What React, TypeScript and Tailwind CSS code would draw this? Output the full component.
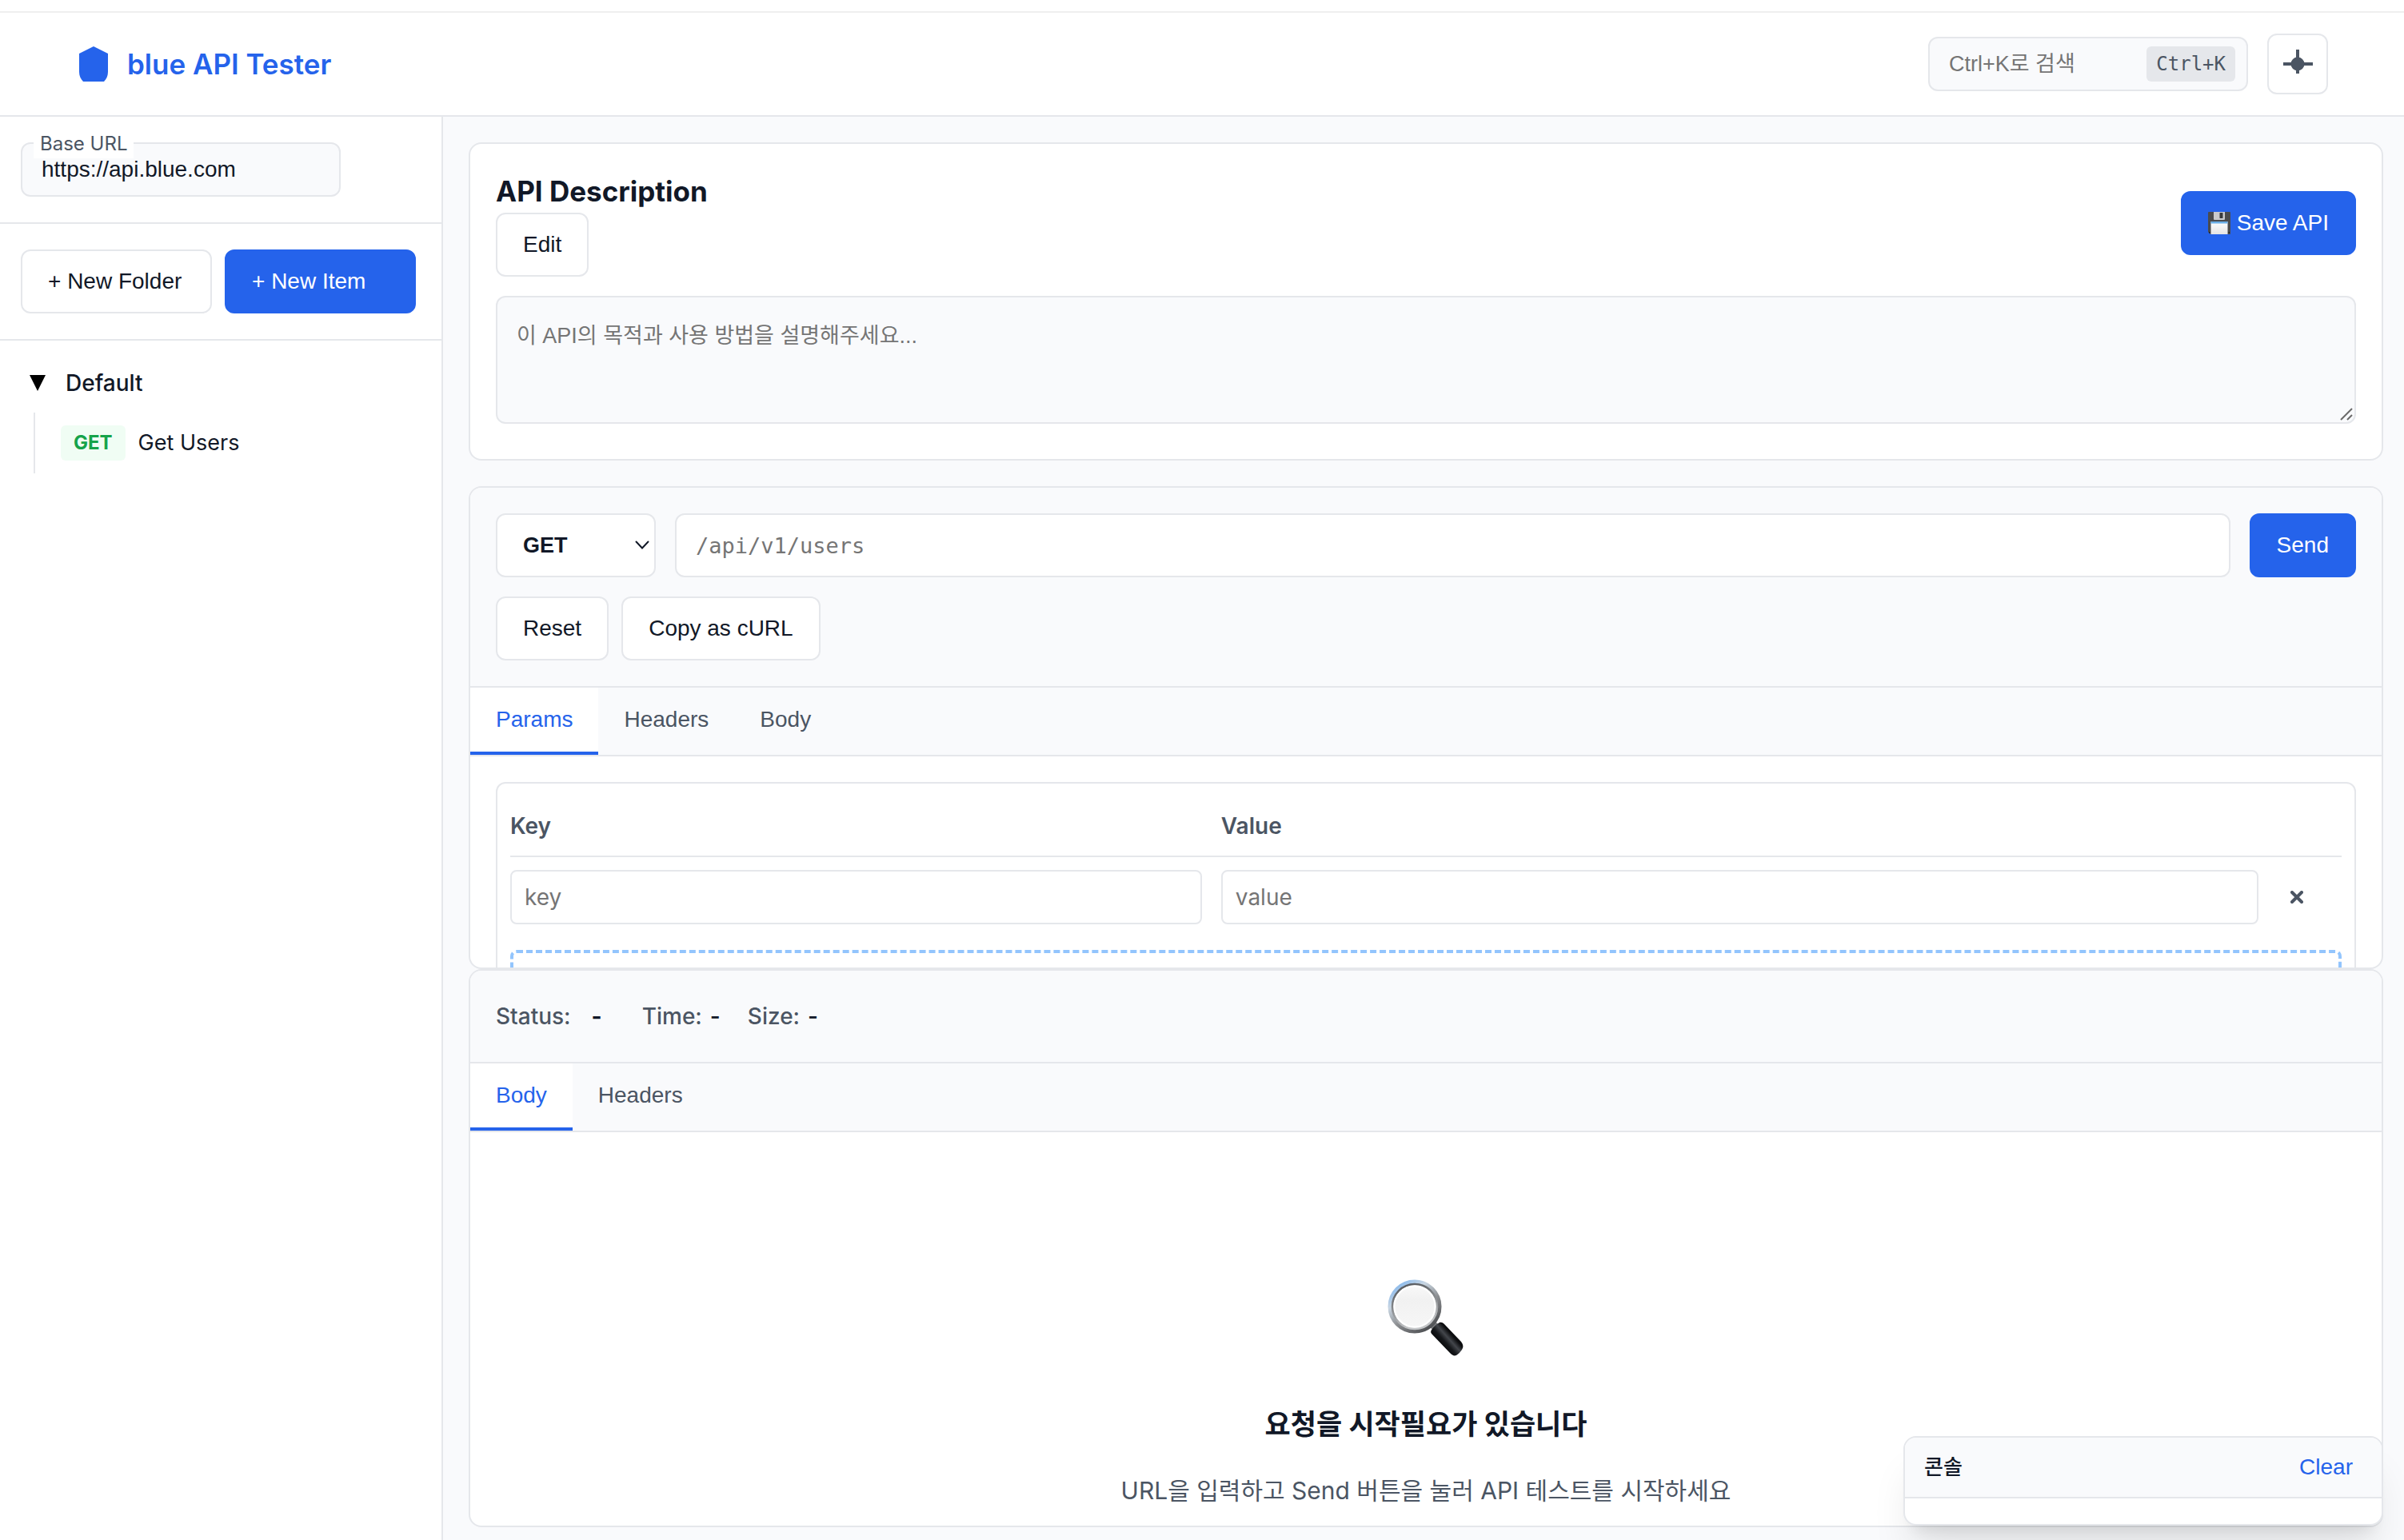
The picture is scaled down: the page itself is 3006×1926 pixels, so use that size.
import { useState } from "react";
import type { ReactNode } from "react";
import clsx from "clsx";

const ARIAL = "font-['Liberation_Sans','Noto_Sans_CJK_KR',sans-serif]";
const MONO = "font-['DejaVu_Sans_Mono',monospace]";

function Button({ primary, className, children }: { primary?: boolean; className?: string; children: ReactNode }) {
  return (
    <button
      type="button"
      className={clsx(
        ARIAL,
        "flex h-20 items-center gap-2 rounded-xl border-2 px-8 text-[28px] leading-8 whitespace-nowrap",
        primary ? "border-[#2563eb] bg-[#2563eb] text-white" : "border-gray-200 bg-white text-[#111827]",
        className,
      )}
    >
      {children}
    </button>
  );
}

function Tabs({ names, label }: { names: string[]; label: string }) {
  const [active, setActive] = useState(names[0]);
  return (
    <div role="tablist" aria-label={label} className="flex shrink-0 border-b-2 border-gray-200 bg-[#f9fafc]">
      {names.map((name) => (
        <button
          key={name}
          type="button"
          role="tab"
          aria-selected={name === active}
          onClick={() => setActive(name)}
          className={clsx(
            ARIAL,
            "border-b-4 px-8 py-6 text-[28px] leading-8",
            name === active ? "border-[#2563eb] bg-white text-[#2563eb]" : "border-transparent text-[#4b5563]",
          )}
        >
          {name}
        </button>
      ))}
    </div>
  );
}

function Logo() {
  return (
    <svg viewBox="0 0 36 44" className="h-11 w-9" fill="#2563eb" aria-hidden="true">
      <path d="M18 0 36 9v23c0 5-2 9-5 12H5C2 41 0 37 0 32V9Z" />
    </svg>
  );
}

function ThemeIcon() {
  return (
    <svg viewBox="0 0 38 38" className="h-[38px] w-[38px]" aria-hidden="true">
      <path d="M19 1v30M1 19h37" stroke="#4b5563" strokeWidth="4" fill="none" />
      <circle cx="19" cy="19" r="8.5" fill="#4b5563" />
    </svg>
  );
}

function FloppyIcon() {
  return (
    <svg viewBox="0 0 28 28" className="h-7 w-7" aria-hidden="true">
      <defs>
        <linearGradient id="floppy-label" x1="0" y1="0" x2="0" y2="1">
          <stop offset="0" stopColor="#ffffff" />
          <stop offset="1" stopColor="#e4e4e4" />
        </linearGradient>
      </defs>
      <path d="M1 0h26a1 1 0 0 1 1 1v26a1 1 0 0 1-1 1H3l-3-3V1a1 1 0 0 1 1-1Z" fill="#4a4b4d" />
      <path d="M7 0h14v9a1 1 0 0 1-1 1H8a1 1 0 0 1-1-1Z" fill="#c9cacc" />
      <rect x="14.500" y="1" width="4" height="7" rx=".5" fill="#3a3b3d" />
      <rect x="3.500" y="12" width="21" height="16" fill="url(#floppy-label)" />
      <rect x="3.500" y="12" width="21" height="2.500" fill="#6aaee6" />
      <path d="M1 25h1.500v1.500H1zM25.500 25H27v1.500h-1.500z" fill="#1f2022" />
    </svg>
  );
}

function MagnifierIcon() {
  return (
    <svg viewBox="0 0 96 96" className="h-24 w-24" aria-hidden="true">
      <defs>
        <linearGradient id="rim" x1="0.100" y1="0" x2="0.800" y2="1">
          <stop offset="0" stopColor="#7db4ee" />
          <stop offset="0.300" stopColor="#c9d6e2" />
          <stop offset="0.600" stopColor="#8d8f92" />
          <stop offset="1" stopColor="#4b4d50" />
        </linearGradient>
        <linearGradient id="rim-inner" x1="0" y1="0" x2="0.300" y2="1">
          <stop offset="0" stopColor="#4f5256" />
          <stop offset="0.500" stopColor="#85888b" />
          <stop offset="1" stopColor="#c4c6c8" />
        </linearGradient>
        <linearGradient id="lens" x1="0" y1="0" x2="0" y2="1">
          <stop offset="0" stopColor="#fbfbfb" />
          <stop offset="0.350" stopColor="#f1f1f1" />
          <stop offset="1" stopColor="#f7f7f7" />
        </linearGradient>
        <linearGradient id="handle" gradientUnits="userSpaceOnUse" x1="66" y1="84" x2="84" y2="68">
          <stop offset="0" stopColor="#050607" />
          <stop offset="0.350" stopColor="#15171a" />
          <stop offset="0.600" stopColor="#43464b" />
          <stop offset="0.850" stopColor="#0c0d0f" />
        </linearGradient>
      </defs>
      <path d="m51 57 7-6 6 6-8 6Z" fill="#77797c" />
      <circle cx="34" cy="34" r="30.500" fill="url(#lens)" stroke="url(#rim)" strokeWidth="6" />
      <circle cx="34" cy="34" r="28" fill="none" stroke="url(#rim-inner)" strokeWidth="2.500" />
      <circle cx="34" cy="34" r="25.500" fill="none" stroke="#ffffff" strokeWidth="2" />
      <path d="M56 62c2-3 5-6 9-8 2-.6 4 0 6 2l21 22c3 4 3 7 1 10s-4 5-7 7c-3 1-5 0-8-3L55 68c-1.500-2-1-4 1-6Z" fill="url(#handle)" />
    </svg>
  );
}

function Sidebar() {
  return (
    <aside className="w-[554px] shrink-0 border-r-2 border-gray-200 bg-white">
      <div className="border-b-2 border-gray-200 py-8 pr-8 pl-[26px]">
        <div className="relative w-[400px]">
          <label htmlFor="base-url" className="absolute -top-4 left-4 bg-white px-2 text-2xl leading-9 text-[#4b5563]">
            Base URL
          </label>
          <input
            id="base-url"
            defaultValue="https://api.blue.com"
            className={clsx(ARIAL, "block h-[68px] w-full rounded-xl border-2 border-gray-200 bg-[#f9fafc] px-6 text-[28px] text-[#111827]")}
          />
        </div>
      </div>
      <div className="grid grid-cols-2 gap-4 border-b-2 border-gray-200 py-8 pr-8 pl-[26px]">
        <Button>+ New Folder</Button>
        <Button primary>+ New Item</Button>
      </div>
      <nav aria-label="Collections" className="px-[26px] py-4 leading-[42px]">
        <button type="button" className="flex w-full items-center gap-6 px-2.5 py-4 text-[28px] leading-[42px] font-medium">
          <svg viewBox="0 0 22 20" className="h-5 w-[22px]" aria-hidden="true">
            <path d="M1 0h20L11 20Z" fill="#000" />
          </svg>
          Default
        </button>
        <ul className="ml-4 border-l-2 border-gray-200">
          <li>
            <a href="#get-users" className="flex items-center gap-4 py-4 pl-8 text-[27px]">
              <span className="rounded-md bg-[#f0fdf4] px-4 py-1 text-2xl leading-9 font-bold text-[#16a34a]">GET</span>
              Get Users
            </a>
          </li>
        </ul>
      </nav>
    </aside>
  );
}

function Description() {
  return (
    <section className="shrink-0 rounded-2xl border-2 border-gray-200 bg-white px-8 pt-8 pb-11">
      <div className="flex items-center justify-between">
        <div>
          <h2 className="text-[35px] leading-[54px] font-bold">API Description</h2>
          <Button>Edit</Button>
        </div>
        <Button primary>
          <FloppyIcon />
          Save API
        </Button>
      </div>
      <div className="relative mt-6">
        <textarea
          aria-label="API Description"
          placeholder="이 API의 목적과 사용 방법을 설명해주세요..."
          className={clsx(ARIAL, "block h-40 w-full resize-none rounded-xl border-2 border-gray-200 bg-[#f9fafc] p-6 text-[27px] leading-[48px] placeholder:text-[#757575]")}
        />
        <svg viewBox="0 0 16 16" className="absolute right-1 bottom-1 h-4 w-4" aria-hidden="true">
          <path d="M1 15 15 1M9 15l6-6" stroke="#6b6b6b" strokeWidth="2" />
        </svg>
      </div>
    </section>
  );
}

function Params() {
  const field =
    "h-[68px] w-full rounded-lg border-2 border-gray-200 bg-white px-4 text-[28px] placeholder:text-[#757575]";
  const row = "grid grid-cols-[2fr_3fr_80px] items-center gap-6";
  return (
    <div className="p-8">
      <div className="rounded-xl border-2 border-gray-200 p-4">
        <table className="block">
          <thead className="block">
            <tr className={clsx(row, "border-b-2 border-gray-200 py-4 text-left text-[28px] leading-[42px] text-[#4b5563]")}>
              <th className="font-semibold">Key</th>
              <th className="font-semibold">Value</th>
              <td />
            </tr>
          </thead>
          <tbody className="block">
            <tr className={clsx(row, "py-4")}>
              <td>
                <input aria-label="Key" placeholder="key" className={field} />
              </td>
              <td>
                <input aria-label="Value" placeholder="value" className={field} />
              </td>
              <td>
                <button type="button" aria-label="Remove parameter" className="flex h-12 w-12 items-center justify-center">
                  <svg viewBox="0 0 16 16" className="h-4 w-4" aria-hidden="true">
                    <path d="m2 2 12 12M14 2 2 14" stroke="#4b5563" strokeWidth="4" strokeLinecap="round" />
                  </svg>
                </button>
              </td>
            </tr>
          </tbody>
        </table>
        <button
          type="button"
          aria-label="Add parameter"
          className="mt-4 block h-20 w-full rounded-lg border-4 border-dashed border-[#93c5fd]"
        />
      </div>
    </div>
  );
}

function Request() {
  return (
    <section className="mt-8 h-[604px] shrink-0 overflow-hidden rounded-2xl border-2 border-gray-200 bg-white">
      <div className="border-b-2 border-gray-200 bg-[#f9fafc] p-8">
        <div className="flex gap-6">
          <div className="relative w-[200px]">
            <select
              aria-label="Method"
              className={clsx(ARIAL, "block h-20 w-full appearance-none rounded-xl border-2 border-gray-200 bg-white px-8 text-[27px] font-bold")}
            >
              <option>GET</option>
              <option>POST</option>
              <option>PUT</option>
              <option>DELETE</option>
            </select>
            <svg viewBox="0 0 18 12" className="pointer-events-none absolute top-[34px] right-2 h-3 w-[18px]" aria-hidden="true">
              <path d="m1.500 1.500 7.500 8 7.500-8" fill="none" stroke="#111827" strokeWidth="2" strokeLinecap="round" />
            </svg>
          </div>
          <input
            aria-label="Request path"
            placeholder="/api/v1/users"
            className={clsx(MONO, "h-20 min-w-0 flex-1 rounded-xl border-2 border-gray-200 bg-white px-6 text-[27px] placeholder:text-[#757575]")}
          />
          <Button primary>Send</Button>
        </div>
        <div className="mt-6 flex gap-4">
          <Button>Reset</Button>
          <Button>Copy as cURL</Button>
        </div>
      </div>
      <Tabs names={["Params", "Headers", "Body"]} label="Request" />
      <Params />
    </section>
  );
}

function Response() {
  return (
    <section className="flex flex-1 flex-col overflow-hidden rounded-2xl border-2 border-gray-200 bg-white">
      <dl className="flex items-center gap-[34px] border-b-2 border-gray-200 bg-[#f9fafc] px-8 py-9 text-[28px] leading-[42px] font-medium">
        <div className="flex gap-2.5">
          <dt className="text-[#4b5563]">Status:</dt>
          <dd className="px-4 font-bold">-</dd>
        </div>
        <div className="flex gap-2.5">
          <dt className="text-[#4b5563]">Time:</dt>
          <dd>-</dd>
        </div>
        <div className="flex gap-2.5">
          <dt className="text-[#4b5563]">Size:</dt>
          <dd>-</dd>
        </div>
      </dl>
      <Tabs names={["Body", "Headers"]} label="Response" />
      <div className="flex flex-col items-center pt-[184px] text-center">
        <MagnifierIcon />
        <h3 className="mt-[58px] text-[35px] leading-[54px] font-bold">요청을 시작필요가 있습니다</h3>
        <p className="mt-8 text-[30px] leading-[48px] text-[#4b5563]">URL을 입력하고 Send 버튼을 눌러 API 테스트를 시작하세요</p>
      </div>
    </section>
  );
}

function Console() {
  return (
    <section
      aria-label="콘솔"
      className="fixed right-[26px] bottom-[18px] w-[600px] overflow-hidden rounded-2xl border-2 border-gray-200 bg-white shadow-[0_40px_50px_-10px_rgba(0,0,0,0.1),0_16px_20px_-12px_rgba(0,0,0,0.1)]"
    >
      <header className="flex items-center justify-between border-b-2 border-gray-200 bg-[#f9fafc] px-6 py-4 text-[28px] leading-[42px]">
        <h2 className="text-[26px] font-medium">콘솔</h2>
        <button type="button" className={clsx(ARIAL, "px-3 text-[#2563eb]")}>
          Clear
        </button>
      </header>
      <div className="h-8" />
    </section>
  );
}

export default function App() {
  return (
    <div className="flex h-screen flex-col overflow-hidden bg-white font-['Inter','Noto_Sans_CJK_KR',sans-serif] text-[#111827]">
      <div className="h-4 shrink-0 border-b-2 border-[#efefef]" />
      <header className="flex h-[130px] shrink-0 items-center justify-between border-b-2 border-gray-200 pr-[95px] pl-[99px]">
        <div className="flex items-center gap-6">
          <Logo />
          <h1 className="text-[35px] leading-[54px] font-semibold text-[#2563eb]">blue API Tester</h1>
        </div>
        <div className="flex items-center gap-6">
          <div className="flex h-[68px] w-[400px] items-center rounded-xl border-2 border-gray-200 bg-[#f9fafc] pr-[14px] pl-6">
            <input
              aria-label="검색"
              placeholder="Ctrl+K로 검색"
              className={clsx(ARIAL, "min-w-0 flex-1 bg-transparent text-[27px] leading-10 placeholder:text-[#757575]")}
            />
            <kbd className={clsx(MONO, "rounded-md bg-gray-200 px-3 py-1 text-2xl leading-9 text-[#4b5563]")}>Ctrl+K</kbd>
          </div>
          <button
            type="button"
            aria-label="Toggle theme"
            className="flex h-[76px] w-[76px] items-center justify-center rounded-xl border-2 border-gray-200 bg-white"
          >
            <ThemeIcon />
          </button>
        </div>
      </header>
      <div className="flex min-h-0 flex-1">
        <Sidebar />
        <main className="flex min-w-0 flex-1 flex-col bg-[#f9fafc] pt-8 pr-[26px] pb-4 pl-8">
          <Description />
          <Request />
          <Response />
        </main>
      </div>
      <Console />
    </div>
  );
}
